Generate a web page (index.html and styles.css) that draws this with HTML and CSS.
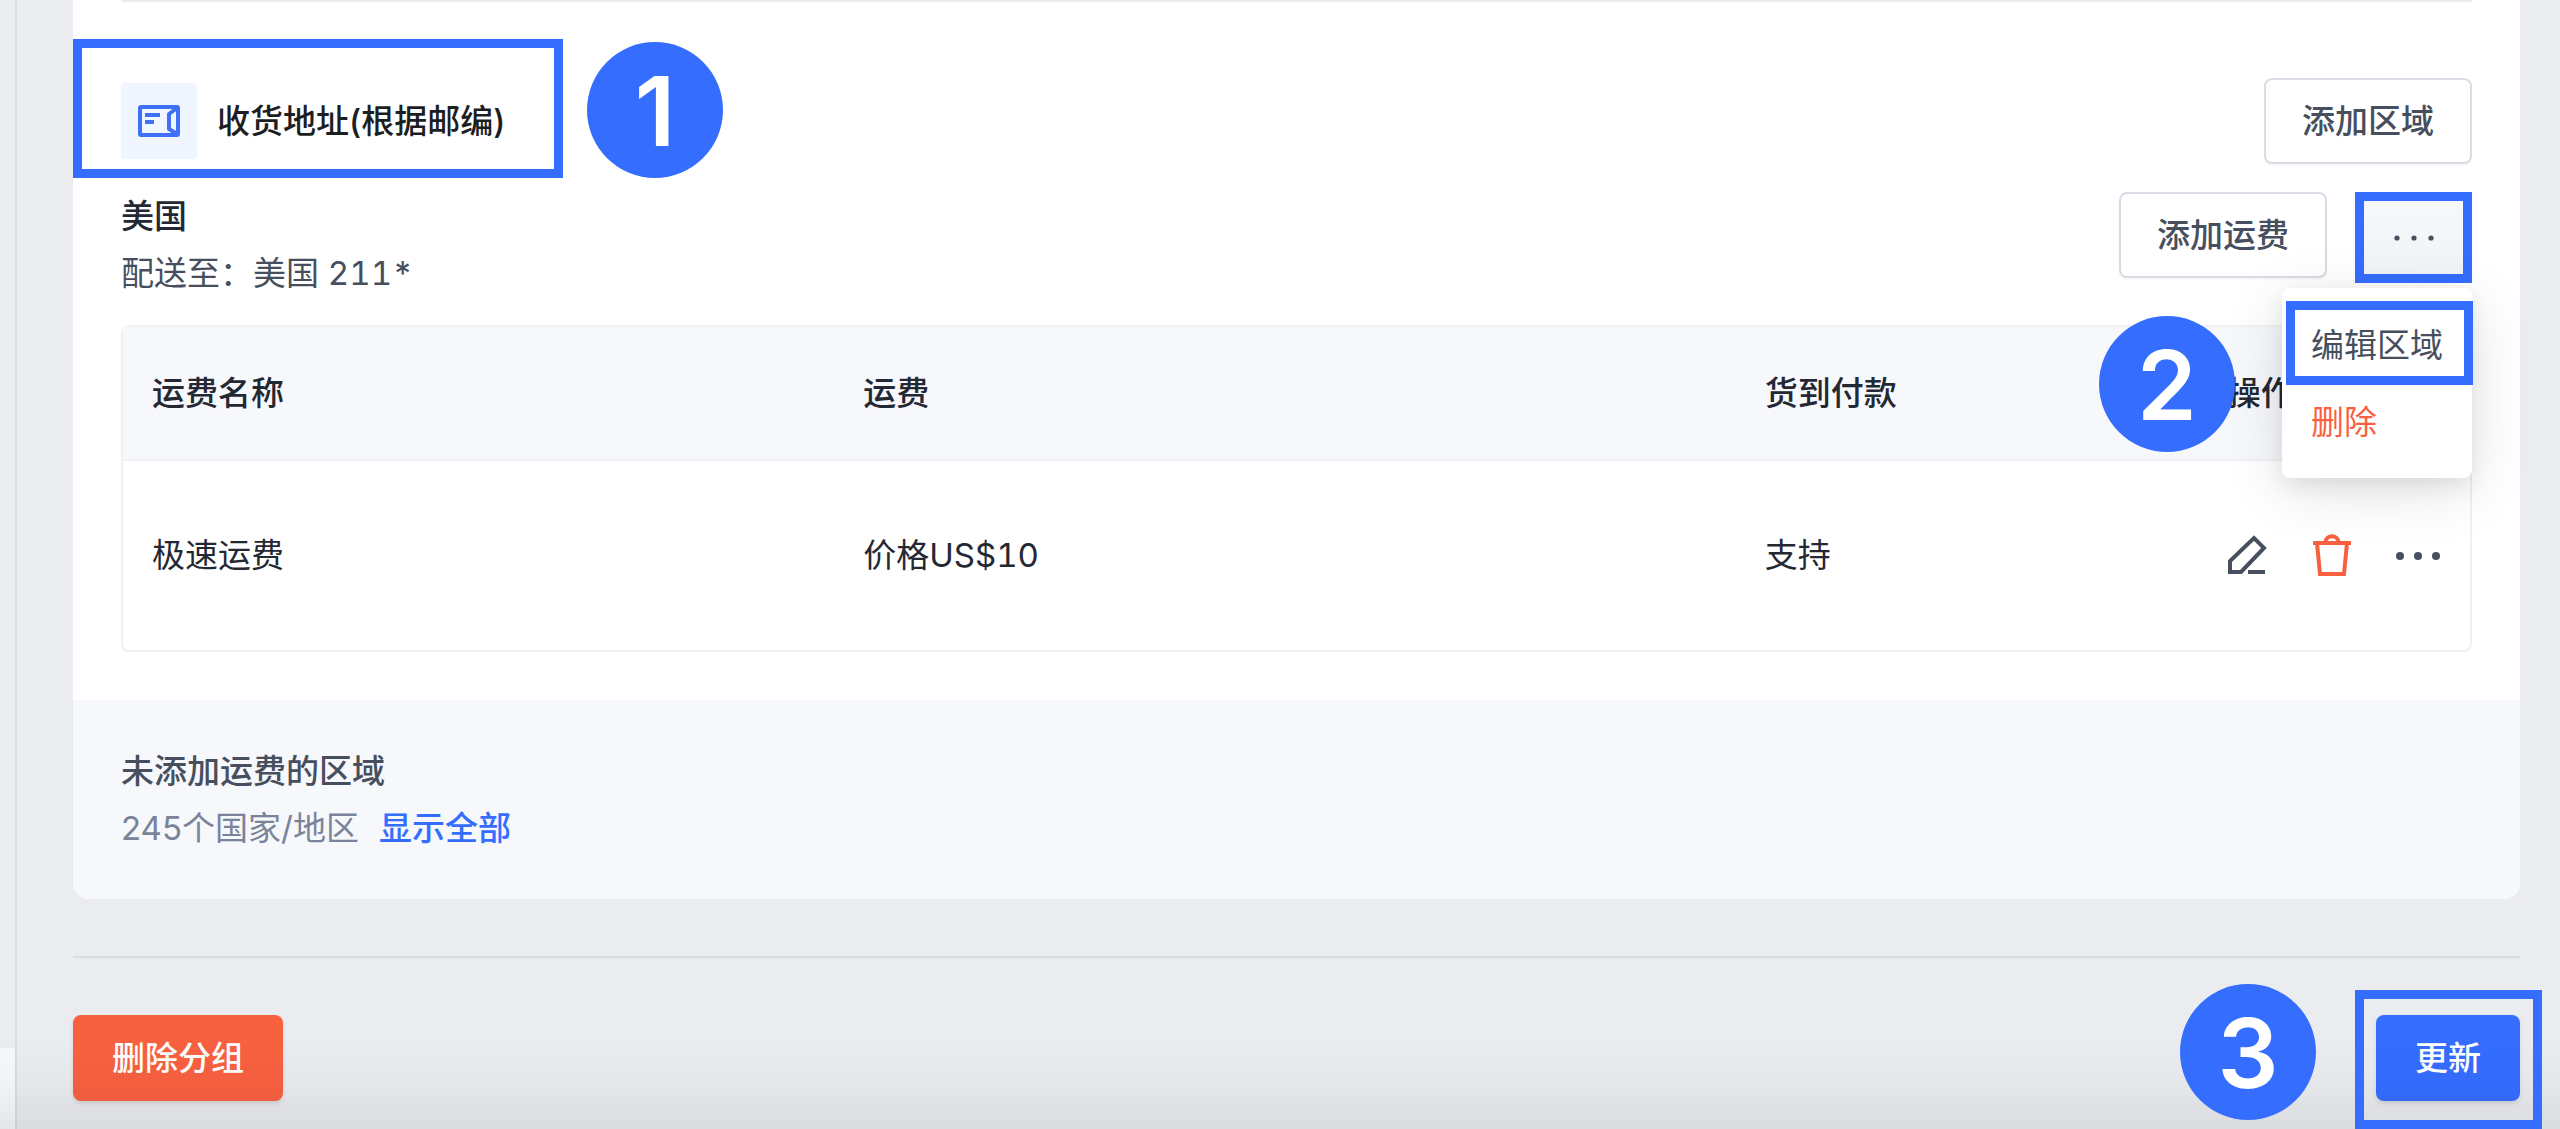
FILE: index.html
```html
<!DOCTYPE html>
<html lang="zh-CN">
<head>
<meta charset="utf-8">
<meta name="viewport" content="width=device-width, initial-scale=1">
<title>运费分组</title>
<link rel="stylesheet" href="styles.css">
</head>
<body>
<div class="side"><div class="side-item"></div></div>
<main class="main">
  <section class="card">
    <div class="zones">
      <header class="method">
        <div class="method-title">
          <span class="tile">
            <svg width="44" height="34" viewBox="0 0 44 34" fill="none" stroke="#3f70f5" stroke-width="4" stroke-linejoin="round">
              <rect x="3" y="3" width="38" height="28" rx="1"/>
              <path d="M40 4 32 10v15l8 5"/>
              <path d="M8 11h15M8 18h9" />
            </svg>
          </span>
          <h2 class="title">收货地址(根据邮编)</h2>
          <span class="frame frame-title"></span>
          <span class="step step-one">1</span>
        </div>
        <button type="button" class="btn">添加区域</button>
      </header>
      <div class="region">
        <div class="region-text">
          <h3 class="title region-name">美国</h3>
          <p class="muted">配送至：美国 211*</p>
        </div>
        <div class="region-actions">
          <button type="button" class="btn">添加运费</button>
          <div class="more">
            <button type="button" class="more-btn" aria-label="更多">
              <svg width="40" height="6" viewBox="0 0 40 6" fill="#474f5e"><circle cx="3" cy="3" r="2.6"/><circle cx="20" cy="3" r="2.6"/><circle cx="37" cy="3" r="2.6"/></svg>
            </button>
            <div class="menu">
              <button type="button" class="menu-item">编辑区域</button>
              <button type="button" class="menu-item danger">删除</button>
              <span class="frame frame-edit"></span>
              <span class="step step-two">2</span>
            </div>
          </div>
        </div>
      </div>
      <div class="table-box">
        <table class="table">
          <thead>
            <tr><th class="c-name">运费名称</th><th class="c-fee">运费</th><th class="c-cod">货到付款</th><th class="c-ops">操作</th></tr>
          </thead>
          <tbody>
            <tr>
              <td>极速运费</td><td>价格US$10</td><td>支持</td>
              <td>
                <div class="ops">
                  <button type="button" class="op" aria-label="编辑">
                    <svg width="40" height="44" viewBox="0 0 40 44" fill="none" stroke="#474f5e" stroke-width="4"><path d="M2 38V27L26 4l10 10-23 24ZM20 38h17"/></svg>
                  </button>
                  <button type="button" class="op" aria-label="删除">
                    <svg width="40" height="44" viewBox="0 0 40 44" fill="none" stroke="#f86140" stroke-width="4"><path d="M1 9h38M5 9l3 31h24l3-31M13 9c1-9 13-9 14 0"/></svg>
                  </button>
                  <button type="button" class="op" aria-label="更多">
                    <svg width="44" height="8" viewBox="0 0 44 8" fill="#474f5e"><circle cx="4" cy="4" r="4"/><circle cx="22" cy="4" r="4"/><circle cx="40" cy="4" r="4"/></svg>
                  </button>
                </div>
              </td>
            </tr>
          </tbody>
        </table>
      </div>
    </div>
    <footer class="rest">
      <h3 class="title rest-title">未添加运费的区域</h3>
      <p class="rest-line"><span>245个国家/地区</span><a href="#all">显示全部</a></p>
    </footer>
  </section>
  <div class="bar">
    <button type="button" class="btn solid red">删除分组</button>
    <div class="update">
      <button type="button" class="btn solid blue">更新</button>
      <span class="frame frame-update"></span>
      <span class="step step-three">3</span>
    </div>
  </div>
</main>
<div class="fade"></div>
</body>
</html>
```

FILE: styles.css
```css
* { box-sizing: border-box; margin: 0; padding: 0; }

body {
  display: flex;
  min-height: 100vh;
  overflow-x: hidden;
  background: #ebecf0;
  color: #242833;
  font: 400 33px/57px Inter, "Noto Sans CJK SC", sans-serif;
}

button { font: inherit; cursor: pointer; border: 0; background: none; }
svg { display: block; }

.side {
  display: flex;
  flex: none;
  flex-direction: column;
  justify-content: flex-end;
  width: 17px;
  border-right: 2px solid #d9dbe6;
}
.side-item { height: 81px; background: #f7f8fc; }

.main { flex: 1; min-width: 0; padding: 0 40px 28px 56px; }

.card { border-radius: 0 0 16px 16px; background: #fff; }
.zones { padding: 0 48px 48px; }

.method {
  display: flex;
  align-items: center;
  justify-content: space-between;
  padding-top: 76px;
  border-top: 2px solid #ebecf0;
}
.method-title { position: relative; display: flex; align-items: center; gap: 20px; }
.tile {
  display: grid;
  place-items: center;
  width: 76px;
  height: 76px;
  border-radius: 4px;
  background: #f0f6ff;
}
.title { font-size: 33px; font-weight: 500; color: #1c1e22; }
.region-name { color: #242833; }

.btn {
  height: 86px;
  padding: 0 36px;
  border: 2px solid #d9dbe6;
  border-radius: 8px;
  background: #fff;
  box-shadow: 0 2px 2px rgba(0, 0, 0, .03);
  color: #474f5e;
  font-weight: 500;
  line-height: 82px;
  white-space: nowrap;
}
.solid { padding: 0 39px; border: 0; color: #fff; line-height: 86px; box-shadow: 0 3px 4px rgba(0, 0, 0, .1); }
.red { background: #f86140; }
.blue { background: #356dff; }

.region { display: flex; justify-content: space-between; margin-top: 24px; }
.muted { color: #474f5e; font-variant-numeric: tabular-nums; }
.region-actions { display: flex; gap: 28px; padding-top: 4px; }
.more { position: relative; }
.more-btn {
  display: grid;
  place-items: center;
  width: 117px;
  height: 91px;
  border: 9px solid #356dff;
  background: linear-gradient(#f7f8fc, #f1f3f7);
}

.menu {
  position: absolute;
  z-index: 2;
  top: 96px;
  right: 0;
  width: 190px;
  height: 190px;
  padding-top: 19px;
  border-radius: 8px;
  background: #fff;
  box-shadow: 0 12px 60px rgba(0, 0, 0, .12), 0 8px 20px rgba(0, 0, 0, .07);
}
.menu-item {
  display: block;
  width: 100%;
  height: 77px;
  padding-left: 29px;
  color: #474f5e;
  line-height: 77px;
  text-align: left;
}
.danger { color: #f86140; }

.table-box { margin-top: 23px; border: 2px solid #eef0f4; border-radius: 8px; }
.table { width: 100%; table-layout: fixed; border-collapse: separate; border-spacing: 0; font-variant-numeric: tabular-nums; }
.table th, .table td { padding: 0 0 0 29px; text-align: left; font-weight: 400; }
.table th { height: 134px; border-bottom: 2px solid #eef0f4; background: #f6f8fc; font-weight: 500; }
.table td { height: 189px; }
.c-name { width: 711px; }
.c-fee { width: 901px; }
.c-cod { width: 463px; }
.c-ops { width: 271px; }
.ops { display: flex; align-items: center; gap: 44px; }
.op { flex: none; }

.rest { padding: 43px 48px 42px; border-radius: 0 0 16px 16px; background: #f6f8fc; }
.rest-title { color: #474f5e; }
.rest-line { display: flex; gap: 20px; color: #7a8499; }
.rest-line a { color: #356dff; font-weight: 500; text-decoration: none; }

.bar {
  display: flex;
  justify-content: space-between;
  margin-top: 57px;
  padding-top: 57px;
  border-top: 2px solid #d9dbe2;
}
.update { position: relative; }

.frame { position: absolute; border: 9px solid #356dff; pointer-events: none; }
.frame-title { top: -44px; left: -48px; width: 490px; height: 139px; }
.frame-edit { top: 13px; right: -1px; width: 187px; height: 84px; }
.frame-update { top: -25px; right: -22px; z-index: 2; width: 187px; height: 139px; }

.step {
  position: absolute;
  z-index: 2;
  width: 136px;
  height: 136px;
  border-radius: 50%;
  background: #356dff;
  color: #fff;
  font-size: 96px;
  font-weight: 600;
  line-height: 138px;
  text-align: center;
}
.step-one { top: -41px; left: 466px; }
.step-two { top: 28px; right: 237px; }
.step-three { top: -31px; right: 204px; }

.fade {
  position: fixed;
  right: 0;
  bottom: 0;
  left: 0;
  height: 90px;
  background: linear-gradient(rgba(0, 0, 0, 0), rgba(0, 0, 0, .02) 50%, rgba(0, 0, 0, .07));
  pointer-events: none;
}
```
